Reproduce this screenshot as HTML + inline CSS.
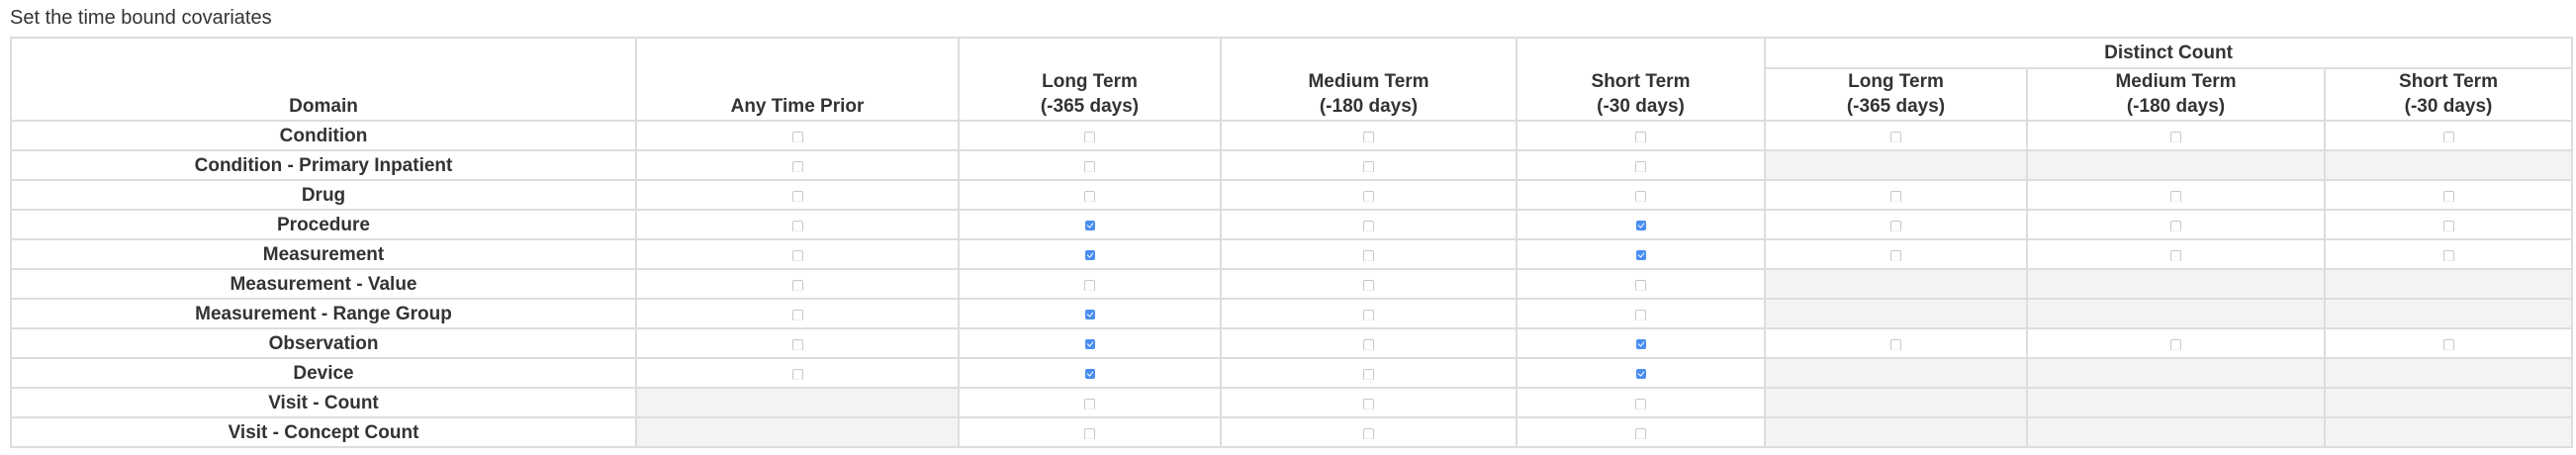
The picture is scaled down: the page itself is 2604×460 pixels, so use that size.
<!DOCTYPE html>
<html><head><meta charset="utf-8"><style>
html,body{margin:0;padding:0;background:#fff;width:2604px;height:460px;overflow:hidden}
body{font-family:"Liberation Sans",Arial,sans-serif;color:#333}
.title{position:absolute;left:10px;top:7px;font-size:20px}
table{position:absolute;left:10px;top:37px;border-collapse:collapse;table-layout:fixed;width:2589px}
td,th{border:2px solid #ddd;padding:0;text-align:center;font-weight:bold;font-size:19px;white-space:nowrap}
th{vertical-align:bottom;line-height:25px;padding-bottom:1px}
tbody tr{height:30px}
tbody td{vertical-align:middle;padding-top:2px}
.d{background:#f3f3f3}
.cb{display:inline-block;width:9px;height:9px;border:1px solid #c8c8c8;border-radius:2px 2px 0 0;border-bottom-color:#eee;vertical-align:middle;margin-top:1px}
.ck{display:inline-block;width:10px;height:10px;background:#4a8ef0;border-radius:2px;vertical-align:middle;position:relative;margin-top:1px}
.ck:after{content:"";position:absolute;left:2px;top:2px;width:5px;height:3px;border-left:1.5px solid #fff;border-bottom:1.5px solid #fff;transform:rotate(-50deg)}
</style></head><body>
<div class="title">Set the time bound covariates</div>
<table>
<colgroup><col style="width:632px"><col style="width:326px"><col style="width:265px"><col style="width:299px"><col style="width:251px"><col style="width:265px"><col style="width:301px"><col style="width:250px"></colgroup>
<thead>
<tr style="height:31px"><th rowspan="2">Domain</th><th rowspan="2">Any Time Prior</th><th rowspan="2">Long Term<br>(-365 days)</th><th rowspan="2">Medium Term<br>(-180 days)</th><th rowspan="2">Short Term<br>(-30 days)</th><th colspan="3" style="vertical-align:middle;padding:0">Distinct Count</th></tr>
<tr style="height:53px"><th>Long Term<br>(-365 days)</th><th>Medium Term<br>(-180 days)</th><th>Short Term<br>(-30 days)</th></tr>
</thead>
<tbody>
<tr><td>Condition</td><td><i class="cb"></i></td><td><i class="cb"></i></td><td><i class="cb"></i></td><td><i class="cb"></i></td><td><i class="cb"></i></td><td><i class="cb"></i></td><td><i class="cb"></i></td></tr>
<tr><td>Condition - Primary Inpatient</td><td><i class="cb"></i></td><td><i class="cb"></i></td><td><i class="cb"></i></td><td><i class="cb"></i></td><td class="d"></td><td class="d"></td><td class="d"></td></tr>
<tr><td>Drug</td><td><i class="cb"></i></td><td><i class="cb"></i></td><td><i class="cb"></i></td><td><i class="cb"></i></td><td><i class="cb"></i></td><td><i class="cb"></i></td><td><i class="cb"></i></td></tr>
<tr><td>Procedure</td><td><i class="cb"></i></td><td><i class="ck"></i></td><td><i class="cb"></i></td><td><i class="ck"></i></td><td><i class="cb"></i></td><td><i class="cb"></i></td><td><i class="cb"></i></td></tr>
<tr><td>Measurement</td><td><i class="cb"></i></td><td><i class="ck"></i></td><td><i class="cb"></i></td><td><i class="ck"></i></td><td><i class="cb"></i></td><td><i class="cb"></i></td><td><i class="cb"></i></td></tr>
<tr><td>Measurement - Value</td><td><i class="cb"></i></td><td><i class="cb"></i></td><td><i class="cb"></i></td><td><i class="cb"></i></td><td class="d"></td><td class="d"></td><td class="d"></td></tr>
<tr><td>Measurement - Range Group</td><td><i class="cb"></i></td><td><i class="ck"></i></td><td><i class="cb"></i></td><td><i class="cb"></i></td><td class="d"></td><td class="d"></td><td class="d"></td></tr>
<tr><td>Observation</td><td><i class="cb"></i></td><td><i class="ck"></i></td><td><i class="cb"></i></td><td><i class="ck"></i></td><td><i class="cb"></i></td><td><i class="cb"></i></td><td><i class="cb"></i></td></tr>
<tr><td>Device</td><td><i class="cb"></i></td><td><i class="ck"></i></td><td><i class="cb"></i></td><td><i class="ck"></i></td><td class="d"></td><td class="d"></td><td class="d"></td></tr>
<tr><td>Visit - Count</td><td class="d"></td><td><i class="cb"></i></td><td><i class="cb"></i></td><td><i class="cb"></i></td><td class="d"></td><td class="d"></td><td class="d"></td></tr>
<tr><td>Visit - Concept Count</td><td class="d"></td><td><i class="cb"></i></td><td><i class="cb"></i></td><td><i class="cb"></i></td><td class="d"></td><td class="d"></td><td class="d"></td></tr>
</tbody>
</table>
</body></html>
